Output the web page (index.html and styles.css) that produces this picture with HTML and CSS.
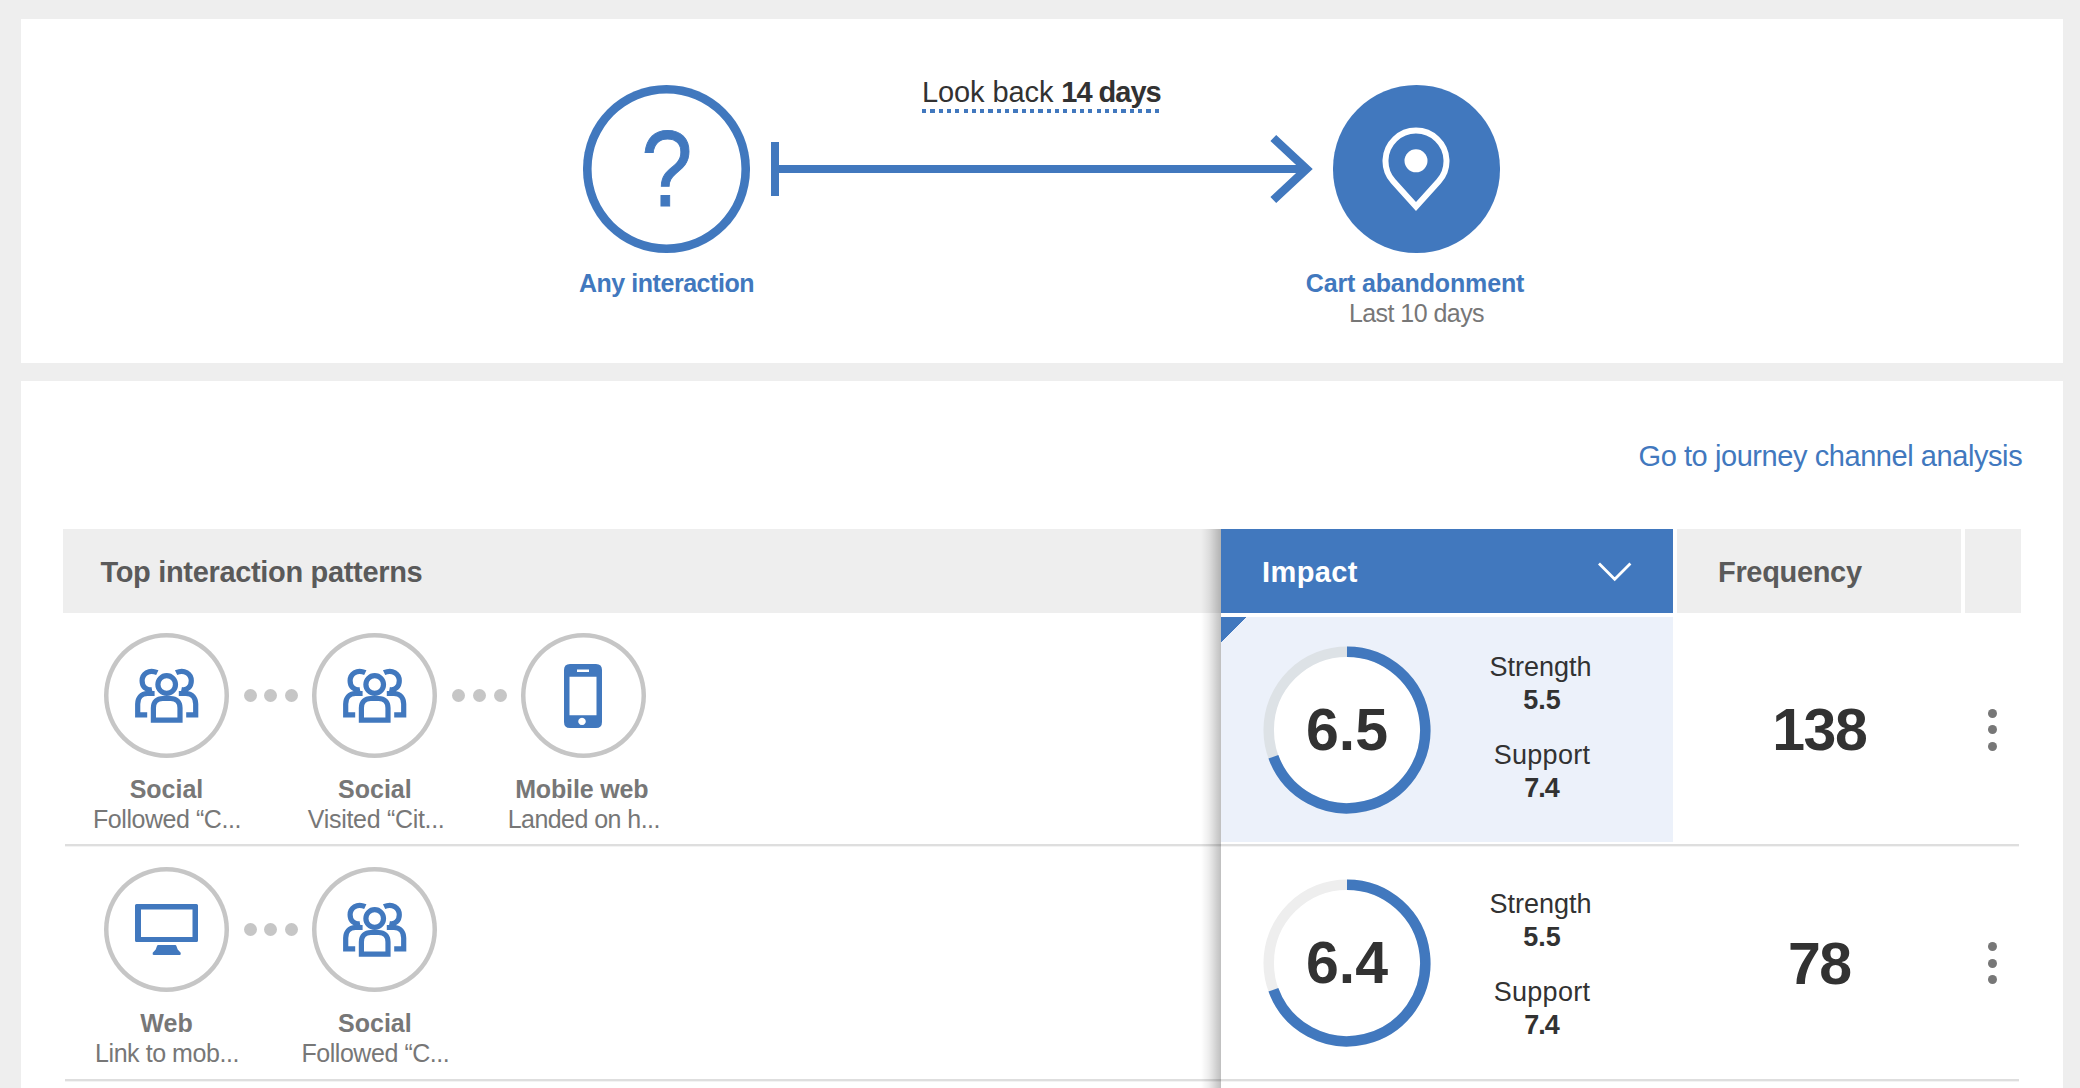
FILE: index.html
```html
<!DOCTYPE html>
<html lang="en">
<head>
<meta charset="utf-8">
<title>Journey analysis</title>
<link rel="stylesheet" href="styles.css">
</head>
<body>
<svg class="defs" width="0" height="0">
  <symbol id="people" viewBox="0 0 64 56">
    <g fill="none" stroke="currentColor" stroke-width="5.200">
      <circle cx="31.7" cy="16.5" r="8.8"/>
      <path d="M18.4 52.2V40c0-6.300 4-9.500 9.300-9.500h8c5.300 0 9.300 3.200 9.300 9.500v12.200z"/>
      <path d="M22.300 4.700C14 .7 7.100 6 7.100 12.800c0 5.500 3.800 10 9.900 8.700M19.600 25.500H12.500C6 25.500 2.700 30.300 2.700 36V46.800H12.200"/>
      <path d="M41.100 4.700C49.400.7 56.300 6 56.300 12.800c0 5.500-3.800 10-9.900 8.700M43.800 25.500h7.100c6.500 0 9.800 4.800 9.800 10.500V46.800H51.200"/>
    </g>
  </symbol>
  <symbol id="phone" viewBox="0 0 38 64">
    <path fill="currentColor" fill-rule="evenodd" d="M6 0h26q6 0 6 6v52q0 6-6 6H6q-6 0-6-6V6q0-6 6-6zM5.500 12.700v38.500h27v-38.500zM13 5.500v2.500h12v-2.500zM18 53.700a3.700 3.700 0 1 0 .01 0z"/>
  </symbol>
  <symbol id="monitor" viewBox="0 0 63 52">
    <path fill="currentColor" fill-rule="evenodd" d="M1.500 0h60q1.500 0 1.500 1.500v35q0 1.500-1.500 1.500h-60q-1.500 0-1.500-1.500v-35q0-1.500 1.500-1.500zM6 5.500v27.500h51.500v-27.500zM23.200 41h17q1 0 1.200 1l1.300 3.500 3 3.200q.5 2.300-1 2.300h-26q-1.500 0-1-2.300l3-3.200 1.300-3.500q.2-1 1.200-1z"/>
  </symbol>
</svg>

<section class="card flow">
  <div class="endpoint">
    <div class="badge outline"><span>?</span></div>
    <div class="endpoint-name any">Any interaction</div>
  </div>
  <div class="lookback">
    <div class="lookback-label">Look back <b>14 days</b></div>
    <svg class="arrow" width="543" height="70" viewBox="0 0 543 70" fill="none" stroke="#4178be">
      <path stroke-width="8" d="M5 8v54"/>
      <path stroke-width="8" d="M5 35h532"/>
      <path stroke-width="8.500" d="M503.300 4L536.500 35 503.300 66"/>
    </svg>
  </div>
  <div class="endpoint">
    <div class="badge solid">
      <svg width="68" height="87" viewBox="0 -2 68 87">
        <path fill="none" stroke="#fff" stroke-width="6" d="M11.200 54.300A30.500 30.500 0 1 1 56.800 54.300L34 79.500z"/>
        <circle cx="34" cy="33.800" r="11.500" fill="#fff"/>
      </svg>
    </div>
    <div class="endpoint-name cart">Cart abandonment</div>
    <div class="endpoint-note">Last 10 days</div>
  </div>
</section>

<section class="card results">
  <a class="link">Go to journey channel analysis</a>
  <div class="table">
    <div class="row head">
      <div class="th patterns-head">Top interaction patterns</div>
      <div class="th impact-head"><span>Impact</span>
        <svg width="36" height="22" viewBox="0 0 36 22"><path d="M2 2.500l15.700 15.700L33.400 2.500" fill="none" stroke="#fff" stroke-width="2.800"/></svg>
      </div>
      <div class="th freq-head">Frequency</div>
      <div class="th"></div>
    </div>

    <div class="row first">
      <div class="patterns">
        <div class="step"><div class="node"><svg width="64" height="56"><use href="#people"/></svg></div><b>Social</b><span>Followed “C...</span></div>
        <div class="dots"><i></i><i></i><i></i></div>
        <div class="step"><div class="node"><svg width="64" height="56"><use href="#people"/></svg></div><b>Social</b><span class="visited">Visited “Cit...</span></div>
        <div class="dots"><i></i><i></i><i></i></div>
        <div class="step mobile"><div class="node"><svg width="38" height="64"><use href="#phone"/></svg></div><b>Mobile web</b><span>Landed on h...</span></div>
      </div>
      <div class="impact selected">
        <div class="gauge">
          <svg width="168" height="168" viewBox="-84 -84 168 168" fill="none" stroke-width="10.500">
            <circle r="78.300" fill="#fff" stroke="#dde2e6"/>
            <path stroke="#4178be" d="M0-78.300A78.300 78.300 0 1 1-73.600 26.800"/>
          </svg>
          <strong>6.5</strong>
        </div>
        <dl><dt>Strength</dt><dd>5.5</dd><dt class="support">Support</dt><dd class="tight">7.4</dd></dl>
      </div>
      <div class="freq">138</div>
      <div class="menu"><i></i><i></i><i></i></div>
    </div>

    <div class="row second">
      <div class="patterns">
        <div class="step"><div class="node"><svg width="63" height="52"><use href="#monitor"/></svg></div><b>Web</b><span>Link to mob...</span></div>
        <div class="dots"><i></i><i></i><i></i></div>
        <div class="step"><div class="node"><svg width="64" height="56"><use href="#people"/></svg></div><b>Social</b><span>Followed “C...</span></div>
      </div>
      <div class="impact">
        <div class="gauge">
          <svg width="168" height="168" viewBox="-84 -84 168 168" fill="none" stroke-width="10.500">
            <circle r="78.300" fill="#fff" stroke="#eee"/>
            <path stroke="#4178be" d="M0-78.300A78.300 78.300 0 1 1-73.600 26.800"/>
          </svg>
          <strong>6.4</strong>
        </div>
        <dl><dt>Strength</dt><dd>5.5</dd><dt class="support">Support</dt><dd class="tight">7.4</dd></dl>
      </div>
      <div class="freq">78</div>
      <div class="menu"><i></i><i></i><i></i></div>
    </div>
    <div class="edge-shadow"></div>
  </div>
</section>
</body>
</html>
```

FILE: styles.css
```css
* { box-sizing: border-box; }
html, body { height: 100%; }
body {
  margin: 0;
  padding: 19px 17.300px 0 21px;
  background: #eee;
  overflow: hidden;
  font-family: "Liberation Sans", Arial, sans-serif;
  color: #323232;
  display: flex;
  flex-direction: column;
  gap: 18px;
}
.defs { position: absolute; }
svg { display: block; }
.card { background: #fff; }

/* Flow summary */
.flow {
  flex: none;
  height: 344px;
  padding: 66.300px .7px 0 0;
  display: flex;
  justify-content: center;
}
.endpoint {
  width: 167.300px;
  display: flex;
  flex-direction: column;
  align-items: center;
  white-space: nowrap;
}
.badge {
  width: 167.300px;
  height: 167.300px;
  border-radius: 50%;
  display: flex;
  align-items: center;
  justify-content: center;
  flex: none;
}
.outline { box-shadow: inset 0 0 0 8.600px #4178be; color: #4178be; font-size: 107px; line-height: 108px; }
.outline span { transform: scaleX(.86); -webkit-text-stroke: 1px #4178be; }
.solid { background: #4178be; }
.endpoint-name {
  margin-top: 15px;
  line-height: 30px;
  font-size: 25px;
  font-weight: bold;
  color: #4178be;
}
.any { letter-spacing: -.46px; }
.cart { letter-spacing: -.15px; margin-right: 3px; }
.endpoint-note { font-size: 25px; line-height: 30px; color: #777; letter-spacing: -.55px; }
.lookback { width: 582.700px; display: flex; flex-direction: column; align-items: center; }
.lookback-label {
  margin: -11.300px 2px 0 0;
  height: 39px;
  font-size: 29px;
  line-height: 36px;
  letter-spacing: -.1px;
  white-space: nowrap;
  width: 237px;
  background: repeating-linear-gradient(90deg, #4178be 0 4.200px, transparent 4.200px 8.310px) 0 100% / 100% 4px no-repeat;
}
.lookback-label b { letter-spacing: -1px; }
.arrow { margin-top: 21px; }

/* Results */
.results { flex: 1; min-height: 0; overflow: hidden; padding: 58px 42px 0 41.500px; }
.link {
  display: block;
  text-align: right;
  color: #4178be;
  font-size: 29px;
  line-height: 34px;
  letter-spacing: -.43px;
  margin-right: -1.500px;
}
.table { position: relative; margin-top: 56px; }
.row { display: grid; grid-template-columns: 1158.500px 452px 287.500px 1fr; position: relative; }
.head { height: 84px; margin-bottom: 4px; grid-template-columns: 1158.500px 452px 288px 1fr; }
.th {
  background: #eee;
  color: #5a5a5a;
  font-size: 29px;
  font-weight: bold;
  letter-spacing: -.33px;
  padding-top: 2px;
  display: flex;
  align-items: center;
  white-space: nowrap;
}
.head .th:nth-child(n+3) { margin-left: 4px; }
.patterns-head { padding-left: 38px; }
.impact-head { background: #4178be; color: #fff; padding: 2px 40px 0 41px; justify-content: space-between; letter-spacing: .4px; }
.impact-head svg { margin-top: -1px; }
.freq-head { padding-left: 41px; }
.first { height: 229px; }
.second { height: 235px; }
.row:not(.head)::after {
  content: "";
  position: absolute;
  left: 2px;
  right: 2px;
  bottom: 0;
  height: 2px;
  background: #dedede;
  box-shadow: 0 1px 0 #f3f3f3;
}
.patterns { display: flex; padding: 16.400px 0 0 41.500px; }
.second .patterns { padding-top: 21px; }
.step {
  width: 125px;
  display: flex;
  flex-direction: column;
  align-items: center;
  color: #777;
  font-size: 25px;
  line-height: 30px;
  white-space: nowrap;
}
.step span { letter-spacing: -.45px; margin-left: 1px; }
.step .visited { letter-spacing: -.3px; margin-left: 2.500px; }
.mobile b { letter-spacing: -.15px; margin-right: 3px; }
.step.mobile span { letter-spacing: -.55px; }
.node {
  width: 125px;
  height: 125px;
  flex: none;
  margin-bottom: 16px;
  box-shadow: inset 0 0 0 4.500px #c6c6c6;
  border-radius: 50%;
  color: #4178be;
  display: flex;
  align-items: center;
  justify-content: center;
}
.dots { width: 83.400px; height: 125px; display: flex; align-items: center; justify-content: center; gap: 7.800px; padding-left: .6px; }
.dots i { width: 13px; height: 13px; border-radius: 50%; background: #c6c6c6; }
.impact { display: flex; align-items: flex-start; padding: 28.500px 0 0 42px; height: 225px; }
.second .impact { padding-top: 32.500px; }
.selected {
  background: linear-gradient(135deg, #4178be 0 17.700px, #ecf1fa 17.700px);
}
.gauge { display: grid; place-items: center; flex: none; }
.gauge > * { grid-area: 1 / 1; }
.gauge strong { font-size: 59px; line-height: 60px; padding-top: 1.500px; }
dl { margin: 5px 0 0 51px; width: 120px; text-align: center; font-size: 27px; line-height: 33px; }
.second dl { margin-top: 9.500px; }
dt { margin-left: -3px; }
dd { margin: 0; font-weight: bold; }
.support { margin: 22px 0 0 0; letter-spacing: .3px; }
.tight { letter-spacing: -1px; margin-left: -1px; }
.freq { font-size: 59px; line-height: 60px; font-weight: bold; text-align: center; padding: 83px 0 0 5px; letter-spacing: -1.500px; }
.second .freq { padding-top: 88px; }
.menu { display: flex; flex-direction: column; align-items: center; gap: 7.700px; padding: 91.500px 0 0 4px; }
.second .menu { padding-top: 96px; }
.menu i { width: 9px; height: 9px; border-radius: 50%; background: #777; }
.edge-shadow {
  position: absolute;
  left: 1138.500px;
  top: 0;
  bottom: -20px;
  width: 20px;
  background: linear-gradient(90deg, rgba(0,0,0,0), rgba(0,0,0,.07) 40%, rgba(0,0,0,.25));
}
```
